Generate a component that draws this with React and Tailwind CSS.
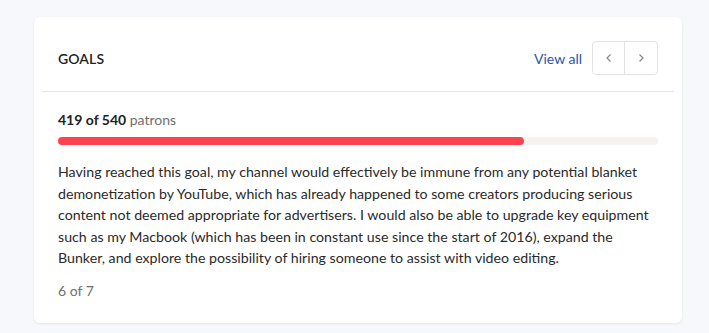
export default function App() {
  const pct = (419 / 540) * 100;
  const lines = [
    'Having reached this goal, my channel would effectively be immune from any potential blanket',
    'demonetization by YouTube, which has already happened to some creators producing serious',
    'content not deemed appropriate for advertisers. I would also be able to upgrade key equipment',
    'such as my Macbook (which has been in constant use since the start of 2016), expand the',
    'Bunker, and explore the possibility of hiring someone to assist with video editing.',
  ];
  return (
    <div className="min-h-[333px] w-full bg-[#f7f8fb] pt-[17px] pl-[34px] pr-[27px] pb-[11px]" style={{ fontFamily: 'Lato, "Noto Sans", sans-serif' }}>
      <div className="w-[648px] rounded-[6px] bg-white shadow-[0_1px_3px_rgba(0,0,0,0.08)] px-[8px] pb-[22px]">
        <div className="flex items-center justify-between px-[16px] pt-[24px] pb-[16px]">
          <div className="text-[14px] font-semibold text-[#222] tracking-[0.1px]">GOALS</div>
          <div className="flex items-center gap-[10px]">
            <a className="text-[14px] text-[#2d55a8]">View all</a>
            <div className="flex h-[34px] rounded-[4px] border border-[#e3e3e3]">
              <button className="flex w-[32px] items-center justify-center border-r border-[#e3e3e3] text-[#888]">
                <svg width="10" height="10" viewBox="0 0 10 10" fill="none" stroke="currentColor" strokeWidth="1.2"><path d="M6.5 1.5 L3 5 L6.5 8.5" /></svg>
              </button>
              <button className="flex w-[32px] items-center justify-center text-[#888]">
                <svg width="10" height="10" viewBox="0 0 10 10" fill="none" stroke="currentColor" strokeWidth="1.2"><path d="M3.5 1.5 L7 5 L3.5 8.5" /></svg>
              </button>
            </div>
          </div>
        </div>
        <div className="h-px bg-[#e4e4e4]" />
        <div className="px-[16px] pt-[18px]">
          <div className="text-[14px] leading-[20px] text-[#6e6e6e]">
            <span className="font-bold text-[#222]">419 of 540</span> patrons
          </div>
          <div className="mt-[7px] h-[8px] w-full rounded-full bg-[#f4f3f2]">
            <div className="h-[8px] rounded-full bg-[#ff424d]" style={{ width: pct + '%' }} />
          </div>
          <p className="mt-[16px] text-[14.2px] leading-[21.5px] text-[#2a2a2a]">
            {lines.map((l, i) => (
              <span key={i} className="block whitespace-nowrap">{l}</span>
            ))}
          </p>
          <div className="mt-[12px] text-[14px] leading-[20px] text-[#707070]">6 of 7</div>
        </div>
      </div>
    </div>
  );
}
